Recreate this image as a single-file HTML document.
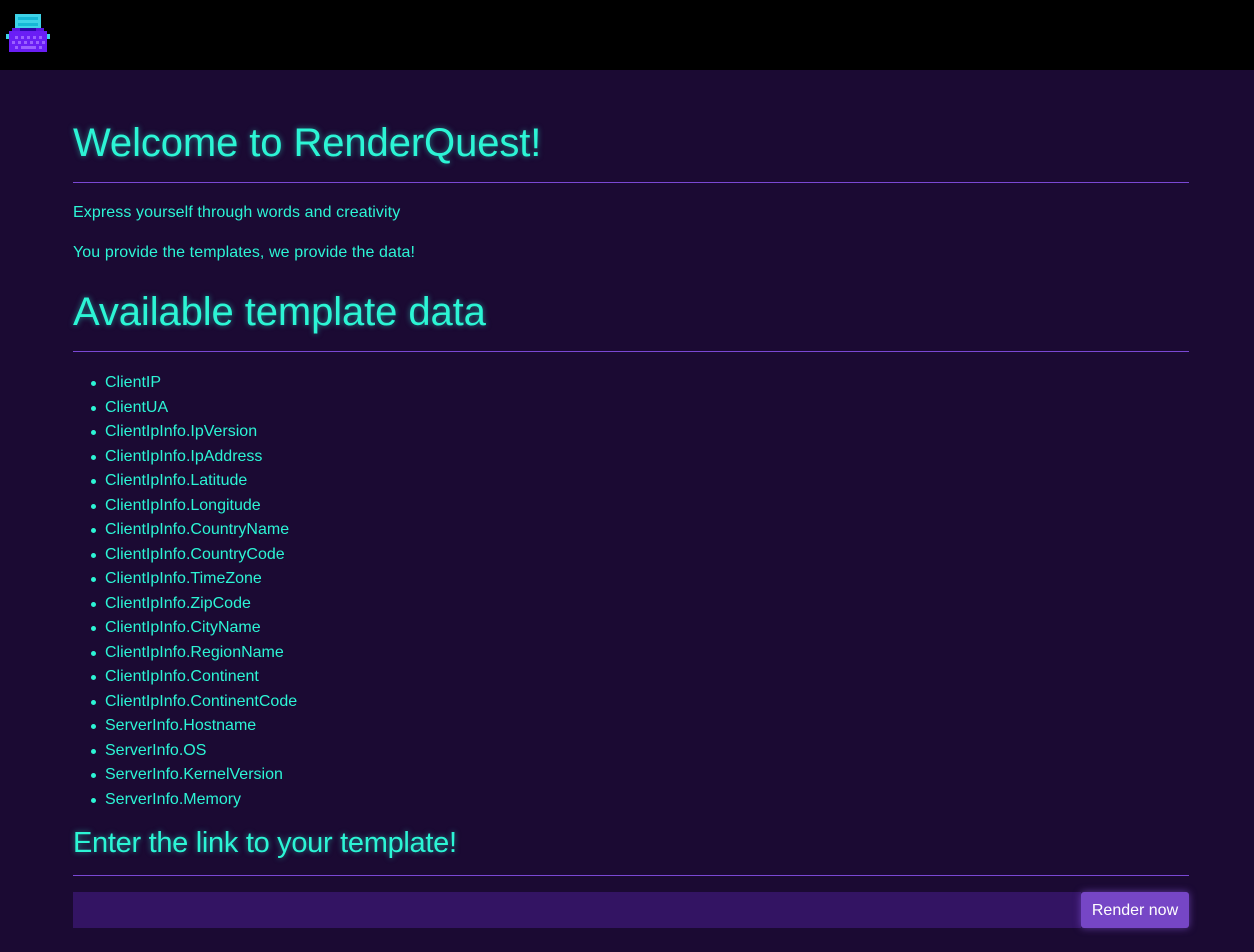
<!DOCTYPE html>
<html><head><meta charset="utf-8"><style>
*{box-sizing:border-box}
body{margin:0;background:#1b0a33;font-family:"Liberation Sans",sans-serif;color:#2cf5d5;width:1254px;height:952px;overflow:hidden}
.hdr{height:70px;background:#000;position:relative}
.main{position:absolute;left:73px;top:70px;width:1116px}
h1,h2,h3{margin:0;font-weight:400;text-shadow:0 0 6px rgba(44,245,213,.5);position:absolute;left:0;white-space:nowrap}
.hr{position:absolute;left:0;width:1116px;height:1px;background:#7a48d4}
p{margin:0;position:absolute;left:0;font-size:16px;letter-spacing:0.1px}
ul{margin:0;padding:0;position:absolute;left:18px;top:302px;list-style:none}
li{font-size:16px;height:24.5px;line-height:22px;position:relative;padding-left:14px;letter-spacing:0}
li:before{content:"";position:absolute;left:0;top:9px;width:5px;height:5px;border-radius:50%;background:#2cf5d5}
.inp{position:absolute;left:0;top:822px;width:1008px;height:36px;background:#331463}
.btn{position:absolute;left:1008px;top:822px;width:108px;height:36px;background:#7646c6;color:#fff;font-size:16px;line-height:38px;text-align:center;border-radius:3px;box-shadow:0 0 8px rgba(140,90,230,.6)}
</style></head><body>
<div class="hdr">
<svg width="60" height="60" style="position:absolute;left:0;top:0" shape-rendering="crispEdges">
<rect x="15" y="14" width="26" height="15" fill="#3ed3e8"/>
<rect x="18" y="17" width="20" height="3" fill="#16b8d6"/>
<rect x="18" y="23" width="20" height="3" fill="#16b8d6"/>
<rect x="12" y="28" width="32" height="3" fill="#5a16e0"/>
<rect x="20" y="28" width="16" height="4" fill="#2a08a8"/>
<rect x="9" y="31" width="38" height="21" fill="#6a1ef5"/>
<rect x="6" y="34" width="3" height="5" fill="#3ed3e8"/>
<rect x="47" y="34" width="3" height="5" fill="#3ed3e8"/>
<g fill="#9a60ff"><rect x="15" y="36" width="3" height="3"/><rect x="21" y="36" width="3" height="3"/><rect x="27" y="36" width="3" height="3"/><rect x="33" y="36" width="3" height="3"/><rect x="39" y="36" width="3" height="3"/>
<rect x="12" y="41" width="3" height="3"/><rect x="18" y="41" width="3" height="3"/><rect x="24" y="41" width="3" height="3"/><rect x="30" y="41" width="3" height="3"/><rect x="36" y="41" width="3" height="3"/><rect x="42" y="41" width="3" height="3"/>
<rect x="15" y="46" width="3" height="3"/><rect x="21" y="46" width="15" height="3"/><rect x="39" y="46" width="3" height="3"/></g>
</svg>
</div>
<div class="main">
<h1 style="top:51px;font-size:40px;letter-spacing:-0.1px">Welcome to RenderQuest!</h1>
<div class="hr" style="top:112px"></div>
<p style="top:134px">Express yourself through words and creativity</p>
<p style="top:174px">You provide the templates, we provide the data!</p>
<h2 style="top:220px;font-size:40px;letter-spacing:-0.1px">Available template data</h2>
<div class="hr" style="top:281px"></div>
<ul>
<li>ClientIP</li><li>ClientUA</li><li>ClientIpInfo.IpVersion</li><li>ClientIpInfo.IpAddress</li><li>ClientIpInfo.Latitude</li><li>ClientIpInfo.Longitude</li><li>ClientIpInfo.CountryName</li><li>ClientIpInfo.CountryCode</li><li>ClientIpInfo.TimeZone</li><li>ClientIpInfo.ZipCode</li><li>ClientIpInfo.CityName</li><li>ClientIpInfo.RegionName</li><li>ClientIpInfo.Continent</li><li>ClientIpInfo.ContinentCode</li><li>ServerInfo.Hostname</li><li>ServerInfo.OS</li><li>ServerInfo.KernelVersion</li><li>ServerInfo.Memory</li>
</ul>
<h3 style="top:757px;font-size:29px;letter-spacing:-0.3px">Enter the link to your template!</h3>
<div class="hr" style="top:805px"></div>
<div class="inp"></div>
<div class="btn">Render now</div>
</div>
</body></html>
